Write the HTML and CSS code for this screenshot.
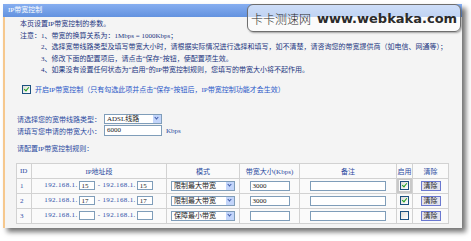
FILE: index.html
```html
<!DOCTYPE html>
<html lang="zh-CN">

<head>
    <meta charset="UTF-8">
    <title>IP带宽控制</title>
    <link rel="stylesheet" href="styles.css">
</head>

<body>
    <div class="shot">
        <!-- Title bar -->
        <div class="title">IP带宽控制</div>

        <div class="content">
            <!-- Notes -->
            <div class="notes">
                <p>本页设置IP带宽控制的参数。</p>
                <p>注意：1、带宽的换算关系为：1Mbps = 1000Kbps；</p>
                <p class="sub">2、选择宽带线路类型及填写带宽大小时，请根据实际情况进行选择和填写，如不清楚，请咨询您的带宽提供商（如电信、网通等）；</p>
                <p class="sub">3、修改下面的配置项后，请点击“保存”按钮，使配置项生效。</p>
                <p class="sub">4、如果没有设置任何状态为“启用”的IP带宽控制规则，您填写的带宽大小将不起作用。</p>
            </div>

            <div class="enable">
                <span class="cb on"></span>
                <span class="enable-text">开启IP带宽控制（只有勾选此项并点击“保存”按钮后，IP带宽控制功能才会生效）</span>
            </div>

            <!-- Line type and bandwidth -->
            <div class="form">
                <div class="row">
                    <span class="lbl">请选择您的宽带线路类型：</span>
                    <span class="sel line-sel">ADSL线路<i class="arrow"></i></span>
                </div>
                <div class="row">
                    <span class="lbl">请填写您申请的带宽大小：</span>
                    <span class="inp line-inp">6000</span>
                    <span class="unit">Kbps</span>
                </div>
            </div>

            <div class="rules-title">请配置IP带宽控制规则：</div>

            <!-- Rules table -->
            <table class="rules">
                <colgroup>
                    <col class="c-id">
                    <col class="c-ip">
                    <col class="c-mode">
                    <col class="c-bw">
                    <col class="c-memo">
                    <col class="c-on">
                    <col class="c-clear">
                </colgroup>
                <tr>
                    <th class="id">ID</th>
                    <th>IP地址段</th>
                    <th>模式</th>
                    <th>带宽大小(Kbps)</th>
                    <th>备注</th>
                    <th>启用</th>
                    <th>清除</th>
                </tr>
                <tr>
                    <td class="id">1</td>
                    <td class="ip-cell">192.168.1.<span class="inp ip">15</span> - 192.168.1.<span class="inp ip">15</span></td>
                    <td><span class="sel mode-sel">限制最大带宽<i class="arrow"></i></span></td>
                    <td><span class="inp bw">3000</span></td>
                    <td><span class="inp memo"></span></td>
                    <td><span class="cb on focus"></span></td>
                    <td><span class="btn">清除</span></td>
                </tr>
                <tr>
                    <td class="id">2</td>
                    <td class="ip-cell">192.168.1.<span class="inp ip">17</span> - 192.168.1.<span class="inp ip">17</span></td>
                    <td><span class="sel mode-sel">限制最大带宽<i class="arrow"></i></span></td>
                    <td><span class="inp bw">3000</span></td>
                    <td><span class="inp memo"></span></td>
                    <td><span class="cb on"></span></td>
                    <td><span class="btn">清除</span></td>
                </tr>
                <tr>
                    <td class="id">3</td>
                    <td class="ip-cell">192.168.1.<span class="inp ip"></span> - 192.168.1.<span class="inp ip"></span></td>
                    <td><span class="sel mode-sel">保障最小带宽<i class="arrow"></i></span></td>
                    <td><span class="inp bw"></span></td>
                    <td><span class="inp memo"></span></td>
                    <td><span class="cb"></span></td>
                    <td><span class="btn">清除</span></td>
                </tr>
            </table>
        </div>

        <!-- Watermark -->
        <div class="mark"><span class="mark-cn">卡卡测速网</span><b>www.webkaka.com</b></div>
    </div>
</body>

</html>
```

FILE: styles.css
```css
body {
    margin: 0;
    background: #fff;
    width: 471px;
    height: 241px;
    overflow: hidden;
    font-family: "Liberation Serif", "Noto Sans CJK SC", serif;
    font-size: 7px;
}

/* Screenshot frame */
.shot {
    position: relative;
    margin: 4px 0 0 3px;
    width: 459px;
    height: 224px;
    background: #f4f4f4;
    box-shadow: 4px 4px 5px rgba(0, 0, 0, 0.55);
    overflow: hidden;
}

.title {
    height: 13px;
    line-height: 13px;
    padding-left: 5px;
    color: #fff;
    background: linear-gradient(to bottom, #86aef0, #6392df);
}

.content {
    border-left: 2px solid #f6c88e;
    height: 211px;
}

/* Notes */
.notes {
    padding-top: 2px;
    color: #1b3580;
}

.notes p {
    margin: 0;
    line-height: 11.5px;
    padding-left: 15px;
    white-space: nowrap;
}

.notes p.sub {
    padding-left: 36px;
}

.enable {
    display: flex;
    align-items: center;
    gap: 4px;
    margin-top: 7px;
    padding-left: 17px;
    height: 11px;
    color: #2a58c8;
    white-space: nowrap;
}

.enable-text {
    font-size: 7px;
}

/* Checkbox */
.cb {
    display: inline-block;
    width: 7px;
    height: 7px;
    border: 1px solid #1c5180;
    background: linear-gradient(135deg, #dcdcd6, #fff);
    vertical-align: middle;
    position: relative;
}

.cb.on::after {
    content: "";
    position: absolute;
    left: 2px;
    top: 0px;
    width: 2px;
    height: 4px;
    border: solid #21a121;
    border-width: 0 1.5px 1.5px 0;
    transform: rotate(40deg);
}

.cb.focus {
    outline: 2px solid #c9c9c9;
    outline-offset: 1px;
}

/* Form rows */
.form {
    margin-top: 18px;
    padding-left: 12px;
    color: #2a4aa0;
}

.row {
    display: flex;
    align-items: center;
    height: 12px;
}

.lbl {
    width: 87px;
    white-space: nowrap;
}

.unit {
    margin-left: 4px;
}

.rules-title {
    margin-top: 7px;
    padding-left: 12px;
    line-height: 11px;
    color: #2a4aa0;
}

/* Fake inputs and selects */
.inp,
.sel {
    display: inline-block;
    box-sizing: border-box;
    border: 1px solid #7f9db9;
    background: #fff;
    color: #222;
    line-height: 8px;
    padding-left: 2px;
    vertical-align: middle;
    text-align: left;
    letter-spacing: 0;
}

.sel {
    position: relative;
}

.line-sel {
    width: 58px;
    height: 10px;
}

.line-inp {
    width: 58px;
    height: 11px;
    line-height: 9px;
}

.mode-sel {
    width: 64px;
    height: 10px;
}

.arrow {
    position: absolute;
    right: 0;
    top: 0;
    bottom: 0;
    width: 8px;
    background: #c3d5fa;
}

.arrow::after {
    content: "";
    position: absolute;
    left: 2px;
    top: 1px;
    width: 2px;
    height: 2px;
    border: solid #3d5aa8;
    border-width: 0 1.5px 1.5px 0;
    transform: rotate(45deg);
}

/* Rules table */
.rules {
    margin: 8px 0 0 11px;
    border-collapse: collapse;
    table-layout: fixed;
    width: 432px;
    background: #fafafa;
}

.c-id { width: 15px; }
.c-ip { width: 135px; }
.c-mode { width: 73px; }
.c-bw { width: 60px; }
.c-memo { width: 97px; }
.c-on { width: 16px; }
.c-clear { width: 36px; }

.rules th,
.rules td {
    border: 1px solid #d2d2d2;
    height: 14px;
    padding: 0;
    text-align: center;
    white-space: nowrap;
    color: #2a4aa0;
    font-weight: normal;
}

.rules td {
    color: #3050a8;
}

.rules td.ip-cell {
    letter-spacing: 0.35px;
}

.rules .id {
    text-align: left;
    padding-left: 3px;
}

.inp.ip {
    width: 16px;
    height: 9px;
    margin: 0 1px;
}

.inp.bw {
    width: 40px;
    height: 10px;
}

.inp.memo {
    width: 76px;
    height: 10px;
}

.btn {
    display: inline-block;
    width: 20px;
    height: 10px;
    line-height: 8px;
    box-sizing: border-box;
    border: 1px solid #6a78d0;
    background: #e4e4ee;
    color: #222;
    vertical-align: middle;
}

/* Watermark over the title bar */
.mark {
    position: absolute;
    left: 244px;
    top: 0;
    width: 214px;
    height: 28px;
    box-sizing: border-box;
    border: 1px solid #6e6e6e;
    border-radius: 6px;
    background: rgba(255, 255, 255, 0.6);
    box-shadow: 1px 1px 2px rgba(0, 0, 0, 0.35);
    display: flex;
    align-items: center;
    justify-content: center;
    gap: 6px;
    white-space: nowrap;
    color: #2b2b2b;
    font-family: "DejaVu Sans", "Noto Sans CJK SC", sans-serif;
    font-size: 14px;
}

.mark-cn {
    font-family: "Noto Sans CJK SC", sans-serif;
    font-size: 12px;
    font-weight: 300;
}

.mark b {
    font-size: 13px;
}
```
